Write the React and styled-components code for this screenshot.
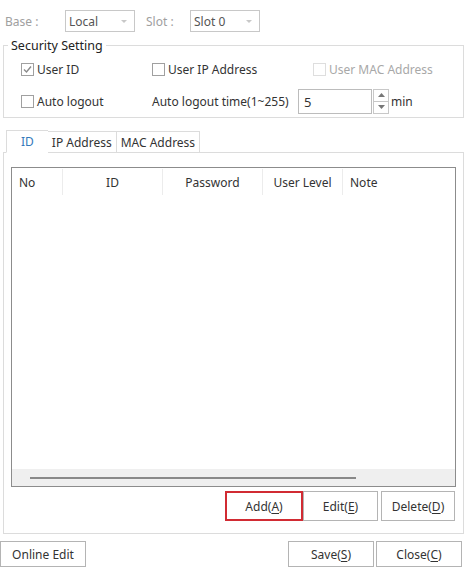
import React from 'react'
import styled, { createGlobalStyle } from 'styled-components'

const Global = createGlobalStyle`
  body {
    margin: 0;
    background: #ffffff;
    font-family: 'Noto Sans', 'Liberation Sans', sans-serif;
    font-size: 12px;
    color: #333333;
  }
`

const columns = [
	{ title: 'No', width: 51, align: 'left' },
	{ title: 'ID', width: 100, align: 'center' },
	{ title: 'Password', width: 100, align: 'center' },
	{ title: 'User Level', width: 80, align: 'center' },
	{ title: 'Note', width: 111, align: 'left' }
]

function Check({ checked, disabled, label }) {
	return (
		<CheckLabel $disabled={disabled}>
			<CheckBox $disabled={disabled}>
				{checked && (
					<svg width="11" height="11" viewBox="0 0 11 11">
						<path d="M2 5.5 L4.5 8 L9 2.5" fill="none" stroke="#8a8a8a" strokeWidth="1.4" />
					</svg>
				)}
			</CheckBox>
			{label}
		</CheckLabel>
	)
}

function Combo({ value }) {
	return (
		<ComboBox>
			{value}
			<ComboArrow />
		</ComboBox>
	)
}

function Mnemonic({ text, letter }) {
	return (
		<>
			{text}(<u>{letter}</u>)
		</>
	)
}

export default function App() {
	return (
		<Page>
			<Global />
			<TopRow>
				<DimLabel $w={60}>Base :</DimLabel>
				<Combo value="Local" />
				<DimLabel $w={44} $ml={11}>Slot :</DimLabel>
				<Combo value="Slot 0" />
			</TopRow>

			<Group>
				<Legend>Security Setting</Legend>
				<OptionGrid>
					<Check checked label="User ID" />
					<Check label="User IP Address" />
					<Check disabled label="User MAC Address" />
					<Check label="Auto logout" />
					<TimeRow>
						<TimeLabel>Auto logout time(1~255)</TimeLabel>
						<NumberBox>5</NumberBox>
						<Spinner>
							<SpinHalf>
								<svg width="7" height="4" viewBox="0 0 7 4"><path d="M0 4 L3.5 0 L7 4 Z" fill="#777" /></svg>
							</SpinHalf>
							<SpinHalf>
								<svg width="7" height="4" viewBox="0 0 7 4"><path d="M0 0 L3.5 4 L7 0 Z" fill="#777" /></svg>
							</SpinHalf>
						</Spinner>
						<span>min</span>
					</TimeRow>
				</OptionGrid>
			</Group>

			<TabBar>
				<Tab $active>ID</Tab>
				<Tab>IP Address</Tab>
				<Tab>MAC Address</Tab>
			</TabBar>
			<TabPanel>
				<Table>
					<HeaderRow>
						{columns.map((c) => (
							<HeaderCell key={c.title} $width={c.width} $align={c.align}>{c.title}</HeaderCell>
						))}
					</HeaderRow>
					<TableBody />
					<HScroll>
						<HThumb />
					</HScroll>
				</Table>
				<ActionRow>
					<Button $w={78} $focus><Mnemonic text="Add" letter="A" /></Button>
					<Button $w={75} $mr={3}><Mnemonic text="Edit" letter="E" /></Button>
					<Button $w={74}><Mnemonic text="Delete" letter="D" /></Button>
				</ActionRow>
			</TabPanel>

			<BottomRow>
				<Button $w={86} $h={26}>Online Edit</Button>
				<Spacer />
				<Button $w={86} $h={26} $mr={2}><Mnemonic text="Save" letter="S" /></Button>
				<Button $w={86} $h={26}><Mnemonic text="Close" letter="C" /></Button>
			</BottomRow>
		</Page>
	)
}

const Page = styled.div`
  width: 465px;
  height: 576px;
  box-sizing: border-box;
  display: flex;
  flex-direction: column;
  overflow: hidden;
`

const TopRow = styled.div`
  display: flex;
  align-items: center;
  height: 22px;
  margin-top: 10px;
  padding-left: 5px;
`

const DimLabel = styled.span`
  color: #a0a0a0;
  width: ${(p) => p.$w}px;
  margin-left: ${(p) => p.$ml || 0}px;
`

const ComboBox = styled.div`
  position: relative;
  width: 70px;
  height: 22px;
  box-sizing: border-box;
  border: 1px solid #c8c8c8;
  padding-left: 3px;
  display: flex;
  align-items: center;
  color: #555555;
`

const ComboArrow = styled.span`
  position: absolute;
  right: 7px;
  top: 9px;
  border-left: 3px solid transparent;
  border-right: 3px solid transparent;
  border-top: 3px solid #c8c8c8;
`

const Group = styled.fieldset`
  margin: 5px 1px 0 3px;
  padding: 0 0 0 17px;
  height: 79px;
  border: 1px solid #dcdcdc;
  box-sizing: content-box;
`

const Legend = styled.legend`
  padding: 0 3px;
  margin-left: -13px;
  font-size: 12.5px;
  color: #222222;
`

const OptionGrid = styled.div`
  display: grid;
  grid-template-columns: 131px 161px 1fr;
  grid-auto-rows: 32px;
  align-items: center;
  margin-top: -1px;
`

const CheckLabel = styled.label`
  display: flex;
  align-items: center;
  gap: 3px;
  color: ${(p) => (p.$disabled ? '#a8a8a8' : '#333333')};
  white-space: nowrap;
`

const CheckBox = styled.span`
  width: 13px;
  height: 13px;
  box-sizing: border-box;
  border: 1px solid ${(p) => (p.$disabled ? '#dedede' : '#a0a0a0')};
  display: flex;
  align-items: center;
  justify-content: center;
  background: #ffffff;
`

const TimeRow = styled.div`
  grid-column: 2 / 4;
  display: flex;
  align-items: center;
  white-space: nowrap;
`

const TimeLabel = styled.span`
  width: 146px;
`

const NumberBox = styled.div`
  width: 74px;
  height: 25px;
  box-sizing: border-box;
  border: 1px solid #bcbcbc;
  padding: 3px 0 0 5px;
  font-size: 13px;
`

const Spinner = styled.div`
  display: flex;
  flex-direction: column;
  width: 16px;
  height: 25px;
  margin: 0 2px 0 1px;
  border: 1px solid #c8c8c8;
  box-sizing: border-box;
`

const SpinHalf = styled.div`
  flex: 1;
  display: flex;
  align-items: center;
  justify-content: center;
  & + & {
    border-top: 1px solid #c8c8c8;
  }
`

const TabBar = styled.div`
  display: flex;
  align-items: flex-end;
  margin: 11px 0 0 6px;
  height: 23px;
  position: relative;
  z-index: 1;
`

const Tab = styled.div`
  height: ${(p) => (p.$active ? '23px' : '21px')};
  box-sizing: border-box;
  padding: 0 ${(p) => (p.$active ? '14px' : '4px')};
  display: flex;
  align-items: center;
  border: 1px solid #dcdcdc;
  border-bottom: ${(p) => (p.$active ? '1px solid #ffffff' : 'none')};
  border-right: ${(p) => (p.$active ? 'none' : '1px solid #dcdcdc')};
  margin-bottom: ${(p) => (p.$active ? '-1px' : '0')};
  background: #ffffff;
  color: ${(p) => (p.$active ? '#3479bb' : '#333333')};
  & + & {
    border-left: none;
  }
`

const TabPanel = styled.div`
  margin: 0 1px 0 3px;
  height: 382px;
  box-sizing: border-box;
  border: 1px solid #dcdcdc;
  padding: 14px 7px 0 7px;
  display: flex;
  flex-direction: column;
`

const Table = styled.div`
  height: 320px;
  box-sizing: border-box;
  border: 1px solid #8c8c8c;
  display: flex;
  flex-direction: column;
  background: #ffffff;
`

const HeaderRow = styled.div`
  display: flex;
  height: 26px;
  margin-top: 1px;
`

const HeaderCell = styled.div`
  width: ${(p) => p.$width}px;
  box-sizing: border-box;
  padding: 0 ${(p) => (p.$align === 'left' ? '7px' : '0')};
  display: flex;
  align-items: center;
  justify-content: ${(p) => (p.$align === 'left' ? 'flex-start' : 'center')};
  border-right: 1px solid #ececec;
  &:last-child {
    border-right: none;
  }
`

const TableBody = styled.div`
  flex: 1;
`

const HScroll = styled.div`
  height: 17px;
  background: #efefef;
  display: flex;
  align-items: center;
  padding-left: 18px;
`

const HThumb = styled.div`
  width: 326px;
  height: 2px;
  background: #888888;
`

const ActionRow = styled.div`
  display: flex;
  justify-content: flex-end;
  margin-top: 4px;
  padding-right: 1px;
`

const Button = styled.div`
  width: ${(p) => p.$w}px;
  height: ${(p) => p.$h || 30}px;
  margin-right: ${(p) => p.$mr || 0}px;
  box-sizing: border-box;
  border: ${(p) => (p.$focus ? '2px solid #d12b33' : '1px solid #b4b4b4')};
  background: #ffffff;
  display: flex;
  align-items: center;
  justify-content: center;
  color: #333333;
  white-space: nowrap;
  u {
    text-underline-offset: 2px;
  }
`

const BottomRow = styled.div`
  display: flex;
  margin-top: 7px;
  padding-right: 3px;
`

const Spacer = styled.div`
  flex: 1;
`
